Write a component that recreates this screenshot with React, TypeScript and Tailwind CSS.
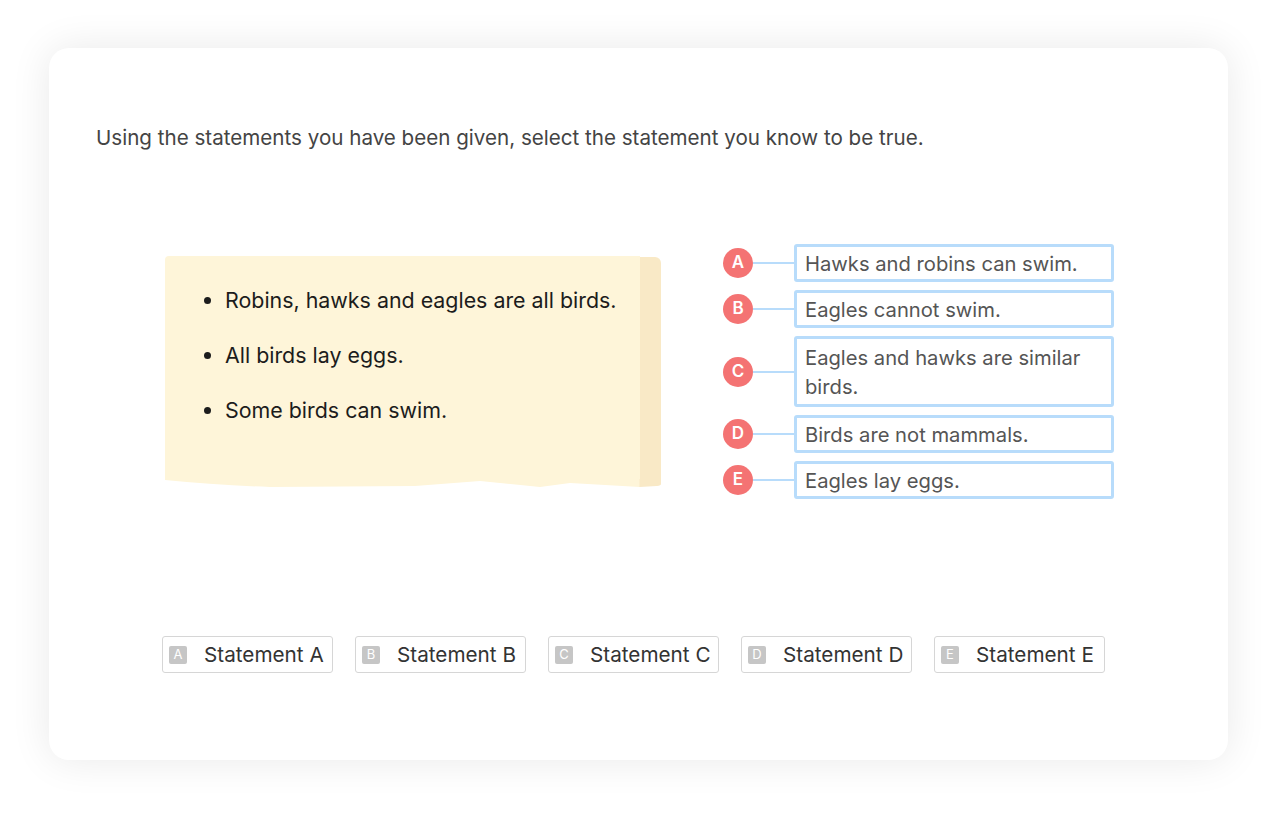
import React from "react";

const options = [
  { l: "A", t: "Hawks and robins can swim." },
  { l: "B", t: "Eagles cannot swim." },
  { l: "C", t: "Eagles and hawks are similar birds." },
  { l: "D", t: "Birds are not mammals." },
  { l: "E", t: "Eagles lay eggs." },
];

function Note() {
  return (
    <div className="flex w-[496px] flex-col">
      <div className="flex h-[223px]">
        <div className="flex-1 rounded-tl-[4px] bg-[#fef5d9] pl-[60px] pt-[30px]">
          <ul className="flex list-disc flex-col gap-[27px] text-[21.4px] leading-[28px] text-[#1c1c1c]">
            <li>Robins, hawks and eagles are all birds.</li>
            <li>All birds lay eggs.</li>
            <li>Some birds can swim.</li>
          </ul>
        </div>
        <div className="mt-[1px] w-[21px] rounded-tr-[6px] bg-[#f9e9c6]" />
      </div>
      <svg width="496" height="9" viewBox="0 0 496 9" className="block">
        <path d="M0,0 L0,1 Q50,6 105,8 L250,7 L315,2 L375,8 L405,4 L475,8 L475,0 Z" fill="#fef5d9" />
        <path d="M474.5,0 L474.5,8 L492,7 Q496,6.5 496,5 L496,0 Z" fill="#f9e9c6" />
      </svg>
    </div>
  );
}

function Options() {
  return (
    <div className="flex flex-col gap-[8px]">
      {options.map((o) => (
        <div key={o.l} className="flex items-center">
          <div className="flex h-[30px] w-[30px] items-center justify-center rounded-full bg-[#f47373] text-[17px] font-semibold text-white">
            {o.l}
          </div>
          <div className="h-[2px] w-[41px] bg-[#b8dcfb]" />
          <div
            className={`w-[320px] rounded-[3px] border-[3px] border-[#b8dcfb] px-[8px] text-[20.2px] leading-[29px] text-[#555555] ${
              o.l === "C" ? "py-[3.5px]" : "py-[1.5px]"
            }`}
          >
            {o.t}
          </div>
        </div>
      ))}
    </div>
  );
}

export default function App() {
  return (
    <div
      className="min-h-[813px] w-[1280px] bg-white pl-[49px] pt-[48px]"
      style={{ fontFamily: "Inter, 'Noto Sans', sans-serif" }}
    >
      <div className="flex h-[712px] w-[1179px] flex-col rounded-[20px] bg-white px-[47px] pt-[76px] shadow-[0_0_40px_rgba(0,0,0,0.09)]">
        <p className="text-[20.6px] leading-[28px] text-[#444444]">
          Using the statements you have been given, select the statement you know to be true.
        </p>
        <div className="mt-[92px] flex items-center justify-center gap-[62px] pl-[2px]">
          <Note />
          <Options />
        </div>
        <div className="mt-[137px] flex justify-center gap-[22px] pr-[10px]">
          {["A", "B", "C", "D", "E"].map((l) => (
            <div
              key={l}
              className="flex h-[37px] w-[171px] items-center rounded-[3px] border border-[#d6d6d6] bg-white pl-[6px]"
            >
              <div className="flex h-[18px] w-[18px] items-center justify-center rounded-[2px] bg-[#c6c6c6] text-[13px] text-white">
                {l}
              </div>
              <span className="ml-[17px] text-[20.7px] leading-[28px] text-[#333333]">Statement {l}</span>
            </div>
          ))}
        </div>
      </div>
    </div>
  );
}
